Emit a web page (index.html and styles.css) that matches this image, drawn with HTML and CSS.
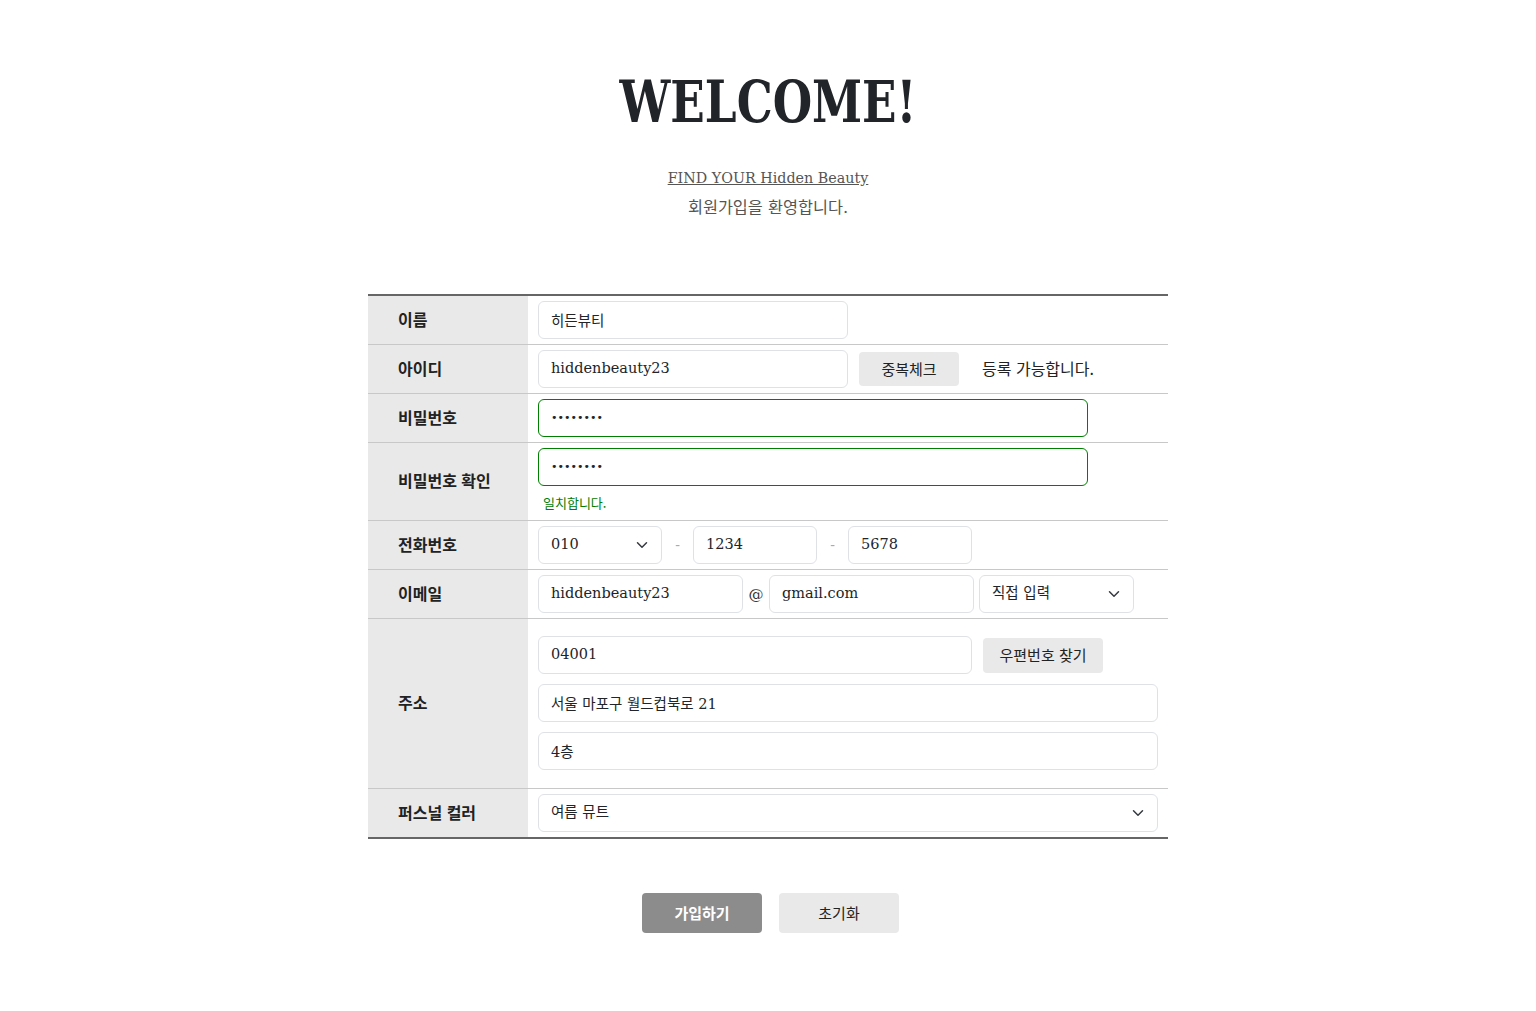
FILE: index.html
```html
<!DOCTYPE html>
<html lang="ko">
<head>
<meta charset="utf-8">
<title>회원가입</title>
<link rel="stylesheet" href="styles.css">
</head>
<body>
<div class="page">
  <header class="intro">
    <h1 class="title">WELCOME!</h1>
    <p class="sub sub-en"><a class="sub-link" href="#">FIND YOUR Hidden Beauty</a></p>
    <p class="sub sub-ko">회원가입을 환영합니다.</p>
  </header>

  <form class="join">
    <table class="join-table">
      <tr>
        <th>이름</th>
        <td><input class="fc w310" type="text" value="히든뷰티"></td>
      </tr>
      <tr>
        <th>아이디</th>
        <td>
          <div class="line">
            <input class="fc w310" type="text" value="hiddenbeauty23">
            <button type="button" class="btn-gray btn-dup">중복체크</button>
            <span class="ok-text">등록 가능합니다.</span>
          </div>
        </td>
      </tr>
      <tr>
        <th>비밀번호</th>
        <td><input class="fc w550 valid" type="password" value="12345678"></td>
      </tr>
      <tr>
        <th>비밀번호 확인</th>
        <td>
          <input class="fc w550 valid" type="password" value="12345678">
          <p class="match">일치합니다.</p>
        </td>
      </tr>
      <tr>
        <th>전화번호</th>
        <td>
          <div class="line gap10">
            <div class="sel w124">
              <select class="fc"><option>010</option></select>
              <svg class="chev" viewBox="0 0 16 16" width="16" height="12"><path d="m2 5 6 6 6-6" fill="none" stroke="#343a40" stroke-width="2" stroke-linecap="round" stroke-linejoin="round"/></svg>
            </div>
            <span class="dash">-</span>
            <input class="fc w124" type="text" value="1234">
            <span class="dash">-</span>
            <input class="fc w124" type="text" value="5678">
          </div>
        </td>
      </tr>
      <tr>
        <th>이메일</th>
        <td>
          <div class="line gap5">
            <input class="fc w205" type="text" value="hiddenbeauty23">
            <span class="at">@</span>
            <input class="fc w205" type="text" value="gmail.com">
            <div class="sel w155">
              <select class="fc"><option>직접 입력</option></select>
              <svg class="chev" viewBox="0 0 16 16" width="16" height="12"><path d="m2 5 6 6 6-6" fill="none" stroke="#343a40" stroke-width="2" stroke-linecap="round" stroke-linejoin="round"/></svg>
            </div>
          </div>
        </td>
      </tr>
      <tr>
        <th>주소</th>
        <td class="addr">
          <div class="line">
            <input class="fc w434" type="text" value="04001">
            <button type="button" class="btn-gray btn-zip">우편번호 찾기</button>
          </div>
          <input class="fc w620" type="text" value="서울 마포구 월드컵북로 21">
          <input class="fc w620" type="text" value="4층">
        </td>
      </tr>
      <tr>
        <th>퍼스널 컬러</th>
        <td>
          <div class="sel w620">
            <select class="fc"><option>여름 뮤트</option></select>
            <svg class="chev" viewBox="0 0 16 16" width="16" height="12"><path d="m2 5 6 6 6-6" fill="none" stroke="#343a40" stroke-width="2" stroke-linecap="round" stroke-linejoin="round"/></svg>
          </div>
        </td>
      </tr>
    </table>

    <div class="actions">
      <button type="submit" class="btn-submit">가입하기</button>
      <button type="reset" class="btn-reset">초기화</button>
    </div>
  </form>
</div>
</body>
</html>
```

FILE: styles.css
```css
* { box-sizing: border-box; }

body {
  margin: 0;
  background: #fff;
  color: #212529;
  font-family: "DejaVu Serif", "Noto Sans CJK KR", serif;
}

.page {
  width: 800px;
  margin: 0 auto;
  padding-top: 68px;
}

.intro {
  text-align: center;
}

.title {
  margin: 0;
  font-family: "DejaVu Serif", serif;
  font-weight: 700;
  font-size: 58px;
  line-height: 68px;
  color: #212529;
  transform: scaleX(0.78);
}

.sub {
  margin: 0;
  line-height: 30px;
  color: #555;
}

.sub-en {
  margin-top: 27px;
  font-size: 14.3px;
}

.sub-ko {
  font-size: 16.3px;
}

.sub-link {
  color: #555;
  text-decoration: underline;
}

.join {
  margin-top: 71px;
}

.join-table {
  width: 800px;
  border-collapse: collapse;
  border-top: 2px solid #666;
  border-bottom: 2px solid #666;
}

.join-table tr {
  border-bottom: 1px solid #c8c8c8;
}

.join-table tr:last-child { border-bottom: none; }

.join-table th {
  width: 160px;
  padding: 0 0 3px 30px;
  background: #e9e9e9;
  text-align: left;
  font-family: "Noto Sans CJK KR", sans-serif;
  font-weight: 700;
  font-size: 16px;
  color: #222;
}

.join-table td {
  padding: 5px 10px;
  vertical-align: top;
}

.line {
  display: flex;
  align-items: center;
}

.gap10 { gap: 10px; }
.gap5 { gap: 5px; }

.fc {
  display: block;
  height: 38px;
  padding: 0 12px 2px;
  border: 1px solid #dee2e6;
  border-radius: 6px;
  background: #fff;
  font-family: "DejaVu Serif", "Noto Sans CJK KR", serif;
  font-size: 14.5px;
  color: #212529;
  outline: none;
}

input[type="password"].fc {
  font-family: "DejaVu Sans", sans-serif;
  font-size: 11px;
  letter-spacing: 0;
}

.valid { border-color: #008000; }

.w124 { width: 124px; }
.w155 { width: 155px; }
.w205 { width: 205px; }
.w310 { width: 310px; }
.w434 { width: 434px; }
.w550 { width: 550px; }
.w620 { width: 620px; }

.sel {
  position: relative;
}

.sel select.fc {
  width: 100%;
  appearance: none;
  -webkit-appearance: none;
}

.chev {
  position: absolute;
  right: 12px;
  top: 13px;
  pointer-events: none;
}

.btn-gray {
  height: 34px;
  border: none;
  border-radius: 4px;
  background: #e9e9e9;
  font-family: "Noto Sans CJK KR", sans-serif;
  font-size: 15px;
  color: #222;
  padding: 0 0 2px;
}

.btn-dup { width: 100px; margin-left: 11px; }
.btn-zip { width: 120px; height: 35px; margin-left: 11px; }

.ok-text {
  margin-left: 23px;
  margin-bottom: 2px;
  font-family: "Noto Sans CJK KR", sans-serif;
  font-size: 16px;
  color: #222;
}

.match {
  margin: 4px 0 0 5px;
  line-height: 25px;
  font-family: "Noto Sans CJK KR", sans-serif;
  font-size: 13px;
  color: #008000;
}

.dash {
  width: 11px;
  text-align: center;
  color: #aaa;
  font-size: 14px;
}

.at {
  width: 16px;
  text-align: center;
  font-size: 15px;
  color: #333;
}

.join-table td.addr {
  padding: 17px 10px 18px;
  display: flex;
  flex-direction: column;
  gap: 10px;
}

.actions {
  display: flex;
  justify-content: center;
  gap: 17px;
  margin-top: 54px;
  padding-left: 5px;
}

.btn-submit, .btn-reset {
  width: 120px;
  height: 40px;
  border: none;
  border-radius: 4px;
  font-family: "Noto Sans CJK KR", sans-serif;
  font-size: 15px;
  padding: 0 0 2px;
}

.btn-submit {
  background: #8c8c8c;
  color: #fff;
  font-weight: 700;
}

.btn-reset {
  background: #e9e9e9;
  color: #222;
}
```
